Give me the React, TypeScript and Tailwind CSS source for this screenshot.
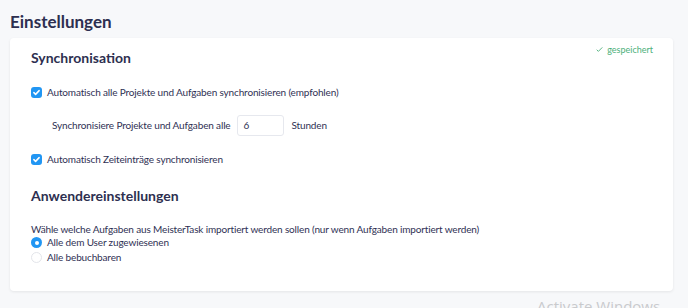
import React from "react";

function Check() {
  return (
    <span className="w-[11px] h-[11px] rounded-[3px] bg-[#2196f3] flex items-center justify-center shrink-0">
      <svg viewBox="0 0 12 12" className="w-[9px] h-[9px]" fill="none" stroke="white" strokeWidth="2" strokeLinecap="round" strokeLinejoin="round">
        <path d="M2.5 6.2l2.3 2.3 4.7-5" />
      </svg>
    </span>
  );
}

function Radio({ checked }: { checked?: boolean }) {
  return checked ? (
    <span className="w-[11px] h-[11px] rounded-full bg-[#2196f3] flex items-center justify-center shrink-0">
      <span className="w-[4px] h-[4px] rounded-full bg-white" />
    </span>
  ) : (
    <span className="w-[11px] h-[11px] rounded-full border border-[#e3e5ea] bg-white shrink-0" />
  );
}

export default function App() {
  return (
    <div className="w-[688px] h-[308px] bg-[#f7f8fa] text-[#2f3154] font-['Lato',sans-serif] text-[10px] tracking-[-0.15px] overflow-hidden relative">
      <h1 className="px-[10px] pt-[10px] text-[17px] tracking-normal font-bold leading-[24px] text-[#2d2f50]">Einstellungen</h1>
      <div className="mx-[10px] mt-[4px] w-[663px] h-[253px] bg-white rounded-[4px] shadow-[0_1px_3px_rgba(0,0,0,0.08)] relative px-[21px] pt-[10px]">
        <div className="absolute right-[20px] top-[5px] flex items-center gap-[4px] text-[9px] tracking-normal text-[#4caf7a]">
          <svg viewBox="0 0 10 10" className="w-[7px] h-[7px]" fill="none" stroke="#4caf7a" strokeWidth="1.3">
            <path d="M1 5.3l2.4 2.4L9 2" />
          </svg>
          gespeichert
        </div>
        <h2 className="text-[14px] tracking-normal font-bold leading-[20px] text-[#2d2f50]">Synchronisation</h2>
        <div className="mt-[17px] flex items-center gap-[5px] leading-[14px]">
          <Check />
          <span>Automatisch alle Projekte und Aufgaben synchronisieren (empfohlen)</span>
        </div>
        <div className="mt-[16px] ml-[21px] flex items-center gap-[7px]">
          <span>Synchronisiere Projekte und Aufgaben alle</span>
          <div className="w-[47px] h-[21px] border border-[#e6e8ee] rounded-[3px] flex items-center px-[5px]">6</div>
          <span>Stunden</span>
        </div>
        <div className="mt-[16px] flex items-center gap-[5px] leading-[14px]">
          <Check />
          <span>Automatisch Zeiteinträge synchronisieren</span>
        </div>
        <h2 className="mt-[20px] text-[14px] tracking-normal font-bold leading-[20px] text-[#2d2f50]">Anwendereinstellungen</h2>
        <p className="mt-[16px] leading-[14px]">
          Wähle welche Aufgaben aus MeisterTask importiert werden sollen (nur wenn Aufgaben importiert werden)
        </p>
        <div className="mt-[-1px] flex items-center gap-[5px] leading-[15px]">
          <Radio checked />
          <span>Alle dem User zugewiesenen</span>
        </div>
        <div className="flex items-center gap-[5px] leading-[15px]">
          <Radio />
          <span>Alle bebuchbaren</span>
        </div>
      </div>
      <div className="absolute left-[537px] top-[295px] text-[15px] tracking-normal text-[#c9cacd] font-['Open_Sans',sans-serif]">Activate Windows</div>
    </div>
  );
}
